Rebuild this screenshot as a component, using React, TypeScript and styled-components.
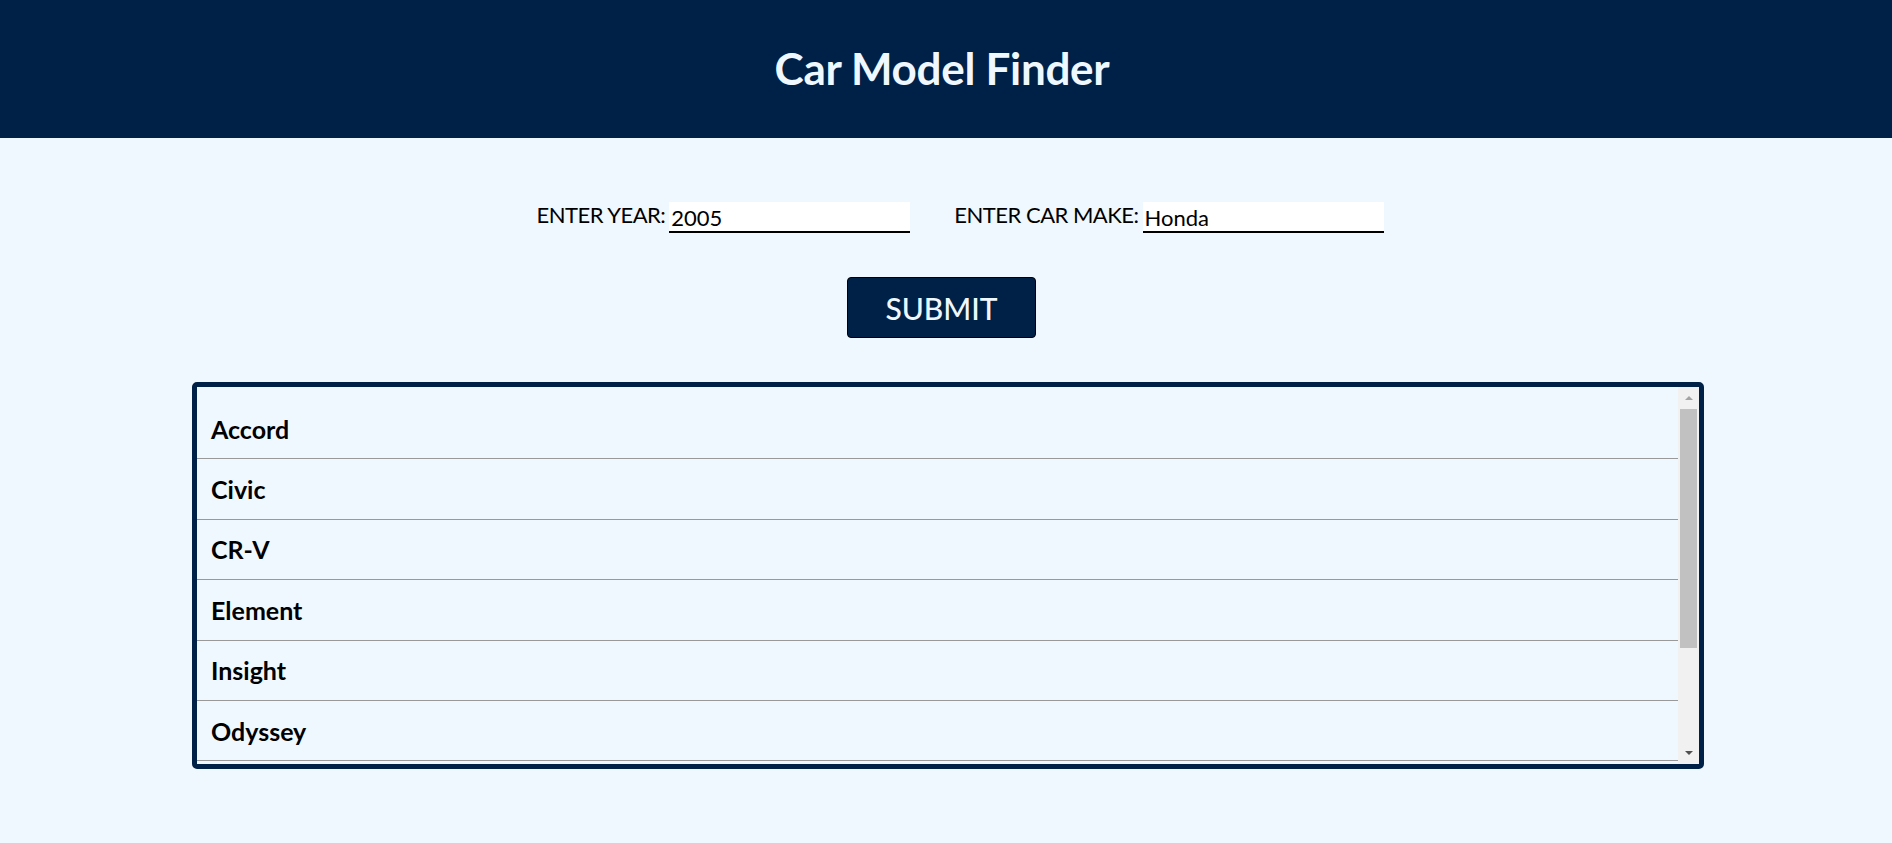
import React from "react";
import styled, { createGlobalStyle } from "styled-components";

const Global = createGlobalStyle`
  html, body { margin: 0; padding: 0; }
  body {
    background: #f0f8ff;
    font-family: Lato, "Open Sans", sans-serif;
  }
  * { box-sizing: border-box; }
`;

const Header = styled.header`
  height: 138px;
  background: #002147;
  display: flex;
  align-items: center;
  justify-content: center;
`;

const Title = styled.h1`
  margin: 0 0 0 -8px;
  padding-bottom: 2px;
  color: #f0f8ff;
  font-size: 44px;
  font-weight: 700;
  letter-spacing: -0.3px;
`;

const Main = styled.main`
  display: flex;
  flex-direction: column;
  align-items: center;
  padding-top: 64px;
`;

const FormRow = styled.div`
  display: flex;
  gap: 44px;
  padding-left: 28px;
  height: 31px;
`;

const Field = styled.label`
  display: flex;
  align-items: flex-end;
  gap: 4px;
  font-size: 22px;
  color: #000;
  letter-spacing: -0.5px;
`;

const LabelText = styled.span`
  padding-bottom: 5px;
`;

const Input = styled.input`
  width: 241px;
  height: 31px;
  border: none;
  border-bottom: 2px solid #000;
  background: #fff;
  font-family: inherit;
  font-size: 22px;
  padding: 1px 2px 0;
  outline: none;
  color: #000;
`;

const SubmitButton = styled.button`
  margin-top: 44px;
  margin-left: -9px;
  width: 189px;
  height: 61px;
  background: #002147;
  color: #f0f8ff;
  border: 1px solid #000;
  border-radius: 4px;
  font-family: inherit;
  font-size: 30px;
  font-weight: 500;
  cursor: pointer;
`;

const ListBox = styled.div`
  margin-top: 44px;
  width: 1512px;
  margin-left: 4px;
  height: 387px;
  border: 5px solid #002147;
  border-radius: 5px;
  overflow: hidden;
  display: flex;
`;

const ListViewport = styled.div`
  flex: 1;
  overflow: hidden;
  padding-top: 12px;
`;

const ScrollTrack = styled.div`
  width: 21px;
  background: #f1f1f1;
  display: flex;
  flex-direction: column;
  align-items: center;
`;

const ArrowButton = styled.div<{ $down?: boolean; $active?: boolean }>`
  height: 22px;
  width: 100%;
  display: flex;
  align-items: center;
  justify-content: center;
  flex-shrink: 0;
  &::after {
    content: "";
    width: 0;
    height: 0;
    border-left: 4px solid transparent;
    border-right: 4px solid transparent;
    ${(p) =>
      p.$down
        ? `border-top: 4px solid ${p.$active ? "#505050" : "#a3a3a3"};`
        : `border-bottom: 4px solid ${p.$active ? "#505050" : "#a3a3a3"};`}
  }
`;

const ThumbArea = styled.div`
  flex: 1;
  width: 100%;
  padding: 0 2px;
`;

const Thumb = styled.div`
  height: 239px;
  background: #c1c1c1;
`;

const ModelList = styled.ul`
  list-style: none;
  margin: 0;
  padding: 0;
`;

const ModelRow = styled.li`
  height: 60.4px;
  display: flex;
  align-items: center;
  padding: 0 0 0 14px;
  border-bottom: 1px solid #999;
  font-size: 25px;
  font-weight: 700;
  color: #000;
`;

const models = ["Accord", "Civic", "CR-V", "Element", "Insight", "Odyssey", "Pilot", "S2000"];

export default function App() {
  return (
    <>
      <Global />
      <Header>
        <Title>Car Model Finder</Title>
      </Header>
      <Main>
        <FormRow>
          <Field>
            <LabelText>ENTER YEAR:</LabelText>
            <Input defaultValue="2005" />
          </Field>
          <Field>
            <LabelText>ENTER CAR MAKE:</LabelText>
            <Input defaultValue="Honda" />
          </Field>
        </FormRow>
        <SubmitButton>SUBMIT</SubmitButton>
        <ListBox>
          <ListViewport>
            <ModelList>
              {models.map((m) => (
                <ModelRow key={m}>{m}</ModelRow>
              ))}
            </ModelList>
          </ListViewport>
          <ScrollTrack>
            <ArrowButton />
            <ThumbArea>
              <Thumb />
            </ThumbArea>
            <ArrowButton $down $active />
          </ScrollTrack>
        </ListBox>
      </Main>
    </>
  );
}
